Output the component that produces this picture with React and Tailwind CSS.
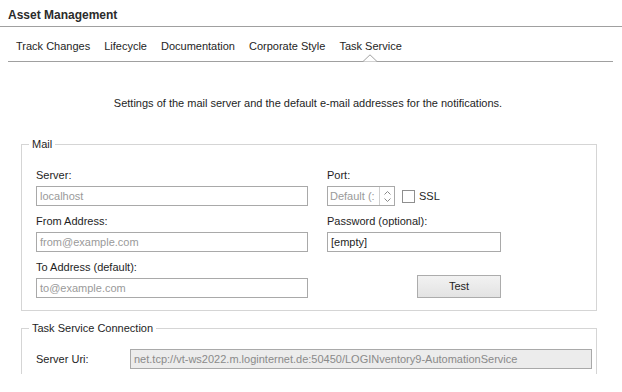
import React from 'react';

// 小工具：標籤 + 輸入框
function Field({ label, value, muted = true, className = '' }) {
  return (
    <div className={className}>
      <div className="h-[14px] leading-[14px]">{label}</div>
      <div className="mt-[4px] h-[20px] border border-[#a9a9a9] bg-white px-[3px] leading-[18px]">
        <span className={muted ? 'text-[#9a9a9a]' : 'text-[#1e1e1e]'}>{value}</span>
      </div>
    </div>
  );
}

const tabs = ['Track Changes', 'Lifecycle', 'Documentation', 'Corporate Style', 'Task Service'];

function App() {
  return (
    <div
      className="w-[622px] h-[392px] bg-white text-[#1e1e1e] text-[11px] overflow-hidden"
      style={{ fontFamily: '"Liberation Sans", Arial, sans-serif' }}
    >
      {/* 標題列 */}
      <div className="h-[27px] border-b border-[#a0a0a0] pl-[8px] pt-[6px] font-bold text-[12px] text-[#2b2b2b]">
        Asset Management
      </div>

      {/* 分頁列 */}
      <div className="relative mx-[8px] mr-[9px] h-[35px] border-b border-[#a0a0a0] flex items-end pb-[8px] pl-[8px] gap-[14px]">
        {tabs.map((t) => (
          <span key={t} className="leading-[14px]">{t}</span>
        ))}
        <svg className="absolute left-[355px] -bottom-[1px]" width="14" height="8" viewBox="0 0 14 8">
          <path d="M0 7.5 L7 0.8 L14 7.5" fill="white" stroke="#a0a0a0" strokeWidth="1" />
        </svg>
      </div>

      <div className="h-[312px] overflow-hidden">
        <div className="text-center pt-[34px] pr-[6px] leading-[14px]">
          Settings of the mail server and the default e-mail addresses for the notifications.
        </div>

        {/* Mail 群組 */}
        <fieldset className="ml-[21px] w-[576px] mt-[27px] border border-[#d5d5d5] pl-[14px] pb-[12px]">
          <legend className="-ml-[7px] px-[3px] leading-[14px]">Mail</legend>
          <div className="grid grid-cols-[272px_174px] gap-x-[19px] gap-y-[8px] pt-[17px]">
            <Field label="Server:" value="localhost" />
            <div>
              <div className="h-[14px] leading-[14px]">Port:</div>
              <div className="mt-[4px] flex items-center">
                <div className="h-[20px] w-[68px] border border-[#a9a9a9] flex">
                  <span className="flex-1 px-[2px] leading-[18px] text-[#9a9a9a] overflow-hidden whitespace-nowrap">Default (:</span>
                  <div className="w-[15px] border-l border-[#cfcfcf] flex flex-col items-center justify-center gap-[3px]">
                    <svg width="7" height="4" viewBox="0 0 7 4"><path d="M0.5 3.5 L3.5 0.5 L6.5 3.5" fill="none" stroke="#8a8a8a" /></svg>
                    <svg width="7" height="4" viewBox="0 0 7 4"><path d="M0.5 0.5 L3.5 3.5 L6.5 0.5" fill="none" stroke="#8a8a8a" /></svg>
                  </div>
                </div>
                <div className="ml-[7px] w-[13px] h-[13px] border border-[#8f8f8f] bg-white"></div>
                <span className="ml-[4px]">SSL</span>
              </div>
            </div>
            <Field label="From Address:" value="from@example.com" />
            <Field label="Password (optional):" value="[empty]" muted={false} />
            <Field label="To Address (default):" value="to@example.com" />
            <div className="flex justify-end items-end">
              <button className="w-[84px] h-[23px] border border-[#acacac] bg-gradient-to-b from-[#f2f2f2] to-[#e3e3e3] text-[#1e1e1e]">
                Test
              </button>
            </div>
          </div>
        </fieldset>

        {/* Task Service Connection 群組 */}
        <fieldset className="ml-[21px] w-[576px] mt-[10px] border border-[#d5d5d5] pl-[14px] pr-[4px] pb-[20px]">
          <legend className="-ml-[7px] px-[3px] leading-[14px]">Task Service Connection</legend>
          <div className="flex items-center pt-[14px]">
            <span className="w-[94px]">Server Uri:</span>
            <div className="flex-1 h-[20px] border border-[#a9a9a9] bg-[#ececec] px-[3px] leading-[18px] text-[#8a8a8a] whitespace-nowrap overflow-hidden">
              net.tcp://vt-ws2022.m.loginternet.de:50450/LOGINventory9-AutomationService
            </div>
          </div>
        </fieldset>
      </div>
    </div>
  );
}

export default App;
